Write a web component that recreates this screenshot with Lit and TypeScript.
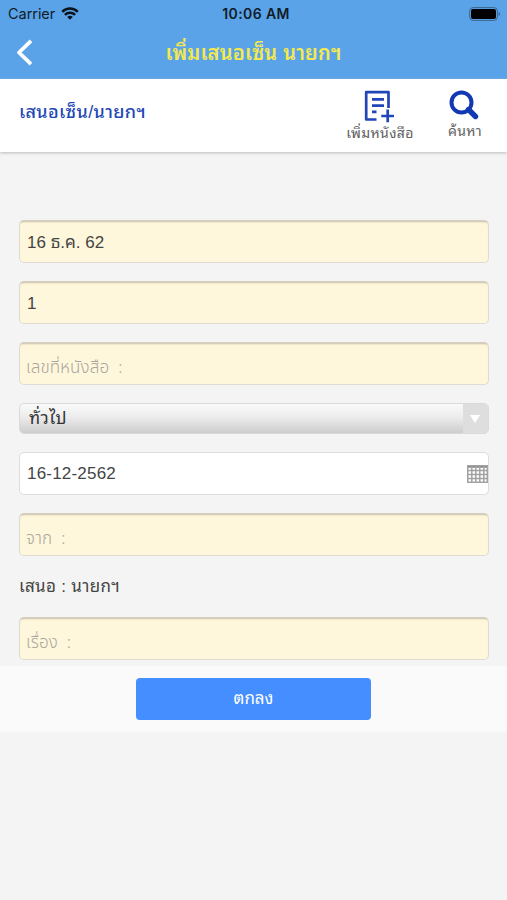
import { LitElement, html, css, svg } from "lit";
import { customElement, property } from "lit/decorators.js";

@customElement("form-field")
class FormField extends LitElement {
  @property() value = "";
  @property() hint = "";
  @property({ type: Boolean, reflect: true }) plain = false;

  static styles = css`
    :host {
      display: flex;
      align-items: center;
      box-sizing: border-box;
      height: 43px;
      padding: 1px 0 0 7px;
      border: 1px solid #dfdad4;
      border-top: 2px solid #d5cdbd;
      border-radius: 5px;
      background: #fff7db;
      box-shadow: inset 0 1px 1px #f0e6c9;
      color: #444;
      white-space: pre;
    }
    :host([plain]) {
      background: #fff;
      border: 1px solid #ddd;
      box-shadow: none;
    }
    .hint {
      color: #aaa69e;
      font-family: "Noto Sans Thai", "Liberation Sans", sans-serif;
      font-weight: 300;
      font-size: 17px;
      letter-spacing: 0.1px;
      padding-top: 6px;
      margin-left: -1px;
    }
    .value { flex: 1; }
    :host([plain]) .value { letter-spacing: 0.2px; }
  `;

  render() {
    return html`${this.value
        ? html`<span class="value">${this.value}</span>`
        : html`<span class="hint">${this.hint}</span>`}<slot></slot>`;
  }
}

@customElement("app-root")
class AppRoot extends LitElement {
  static styles = css`
    :host {
      display: flex;
      flex-direction: column;
      height: 900px;
      overflow: hidden;
      background: #f4f4f4;
      font: 17px/22px "Liberation Sans", "Noto Sans Thai Looped", "Loma", "Noto Sans Thai", sans-serif;
      color: #444;
    }
    svg { display: block; }
    header {
      height: 79px;
      background: #5aa3e8;
      color: #111c28;
      flex: none;
    }
    .status {
      display: grid;
      grid-template-columns: 1fr auto 1fr;
      align-items: center;
      height: 27px;
      padding: 0 6px 0 8px;
      font: 14.5px/27px Inter, sans-serif;
    }
    .carrier { display: flex; align-items: center; gap: 6px; letter-spacing: -0.05px; }
    .clock { font-weight: 600; font-size: 14px; letter-spacing: 0.4px; margin-left: 3px; }
    .battery { justify-self: end; }
    .nav {
      display: grid;
      grid-template-columns: 60px 1fr 60px;
      align-items: center;
      height: 50px;
    }
    .back { margin-left: 15px; }
    .title {
      text-align: center;
      color: #f5e94e;
      font-size: 20px;
      font-weight: 600;
      letter-spacing: 0.2px;
      padding-top: 1px;
      white-space: nowrap;
    }
    .tools {
      display: flex;
      flex: none;
      height: 73px;
      background: #fff;
      box-shadow: 0 1px 3px #bbb;
      padding-left: 19px;
    }
    .crumb { flex: 1; color: #2347b5; font-size: 18px; font-weight: 500; letter-spacing: 0.33px; padding-top: 22px; }
    .tool {
      display: flex;
      flex-direction: column;
      align-items: center;
      width: 86px;
      padding-top: 10px;
      font-size: 14px;
      line-height: 20px;
      letter-spacing: 0.35px;
      color: #606060;
      white-space: nowrap;
    }
    .tool svg { margin-left: -4px; }
    .tool.find { width: 84px; }
    .tool.find svg { margin-left: -2px; }
    form {
      display: flex;
      flex-direction: column;
      flex: none;
      padding: 68px 18px 6px 19px;
    }
    form-field { margin-bottom: 18px; }
    form-field.last { margin-bottom: 0; }
    .select {
      display: flex;
      height: 31px;
      box-sizing: border-box;
      margin-bottom: 18px;
      border: 1px solid #dadada;
      border-radius: 5px;
      background: linear-gradient(#fafafa, #ececec 45%, #cdcdcd);
      overflow: hidden;
    }
    .choice { flex: 1; padding-left: 9px; line-height: 29px; letter-spacing: 0.6px; color: #333; }
    .arrow {
      display: grid;
      place-items: center;
      width: 25px;
      padding-right: 2px;
      box-sizing: border-box;
      background: #dedede;
    }
    .note { height: 22px; margin: 2px 0 19px; letter-spacing: 0.3px; color: #444; }
    footer {
      display: flex;
      justify-content: center;
      align-items: center;
      flex: none;
      height: 66px;
      background: #fafafa;
    }
    button {
      width: 235px;
      height: 42px;
      border: 0;
      border-radius: 4px;
      background: #448eff;
      color: #fff;
      font: inherit;
      margin: 0;
    }
  `;

  private grid() {
    const v = [0.8, 4.8, 8.8, 12.8, 16.8, 20.3];
    const h = [5.5, 9.5, 13.5, 17.3];
    return svg`${v.map((x) => svg`<path d=${`M${x} 1V18`} />`)}${h.map((y) => svg`<path d=${`M0 ${y}H21`} />`)}`;
  }

  render() {
    return html`
      <header>
        <div class="status">
          <div class="carrier">
            <span>Carrier</span>
            <svg width="18" height="13" viewBox="0 0 18 13" fill="none" stroke="#0b141d" stroke-width="2.5">
              <path d="M1.2 4.8a11 11 0 0 1 15.6 0M3.9 7.9a7.2 7.2 0 0 1 10.2 0" />
              <path d="M9 12.7 6.2 10a4 4 0 0 1 5.6 0Z" fill="#0b141d" stroke="none" />
            </svg>
          </div>
          <div class="clock">10:06 AM</div>
          <svg class="battery" width="32" height="14" viewBox="0 0 32 14">
            <rect x=".6" y=".6" width="27.8" height="12.8" rx="3.5" fill="none" stroke="#39678f" />
            <rect x="2" y="2" width="25" height="10" rx="2" fill="#000" />
            <path d="M29.6 5v4q1.5-.6 1.5-2t-1.5-2" fill="#39678f" />
          </svg>
        </div>
        <div class="nav">
          <svg class="back" width="18" height="27" viewBox="0 0 18 27" fill="none" stroke="#fff" stroke-width="3.8" stroke-linejoin="round">
            <path d="M16 1.8 4 13.5 16 25.2" />
          </svg>
          <div class="title">เพิ่มเสนอเซ็น นายกฯ</div>
        </div>
      </header>
      <div class="tools">
        <div class="crumb">เสนอเซ็น/นายกฯ</div>
        <div class="tool">
          <svg width="32" height="34" viewBox="0 0 32 34" fill="none" stroke="#2046b8" stroke-width="2.7" stroke-linejoin="round">
            <path d="M14.5 30.5H4.2V3.2H26.5V19M10 10.3H22M10 16.7H22M10 22.8H14.5M25.7 20.5V33.2M19.3 27H32" />
          </svg>
          <span>เพิ่มหนังสือ</span>
        </div>
        <div class="tool find">
          <svg width="30" height="32" viewBox="0 0 30 32" fill="none" stroke="#1238b4" stroke-width="4">
            <circle cx="12.5" cy="13.5" r="10" />
            <path d="m19.5 20.5 7 7" stroke-width="5.4" stroke-linecap="round" />
          </svg>
          <span>ค้นหา</span>
        </div>
      </div>
      <form>
        <form-field value="16 ธ.ค. 62"></form-field>
        <form-field value="1"></form-field>
        <form-field hint="เลขที่หนังสือ  :"></form-field>
        <div class="select">
          <span class="choice">ทั่วไป</span>
          <span class="arrow">
            <svg width="10" height="8" viewBox="0 0 10 8"><path d="M0 0h10L5 8Z" fill="#fff" /></svg>
          </span>
        </div>
        <form-field plain value="16-12-2562">
          <svg width="21" height="18" viewBox="0 0 21 18" fill="none" stroke="#a2a2a2" stroke-width="1.5">
            <path d="M0 1.5H21" stroke="#8c8c8c" stroke-width="2.6" />
            ${this.grid()}
          </svg>
        </form-field>
        <form-field hint="จาก  :"></form-field>
        <div class="note">เสนอ : นายกฯ</div>
        <form-field class="last" hint="เรื่อง  :"></form-field>
      </form>
      <footer><button>ตกลง</button></footer>
    `;
  }
}
